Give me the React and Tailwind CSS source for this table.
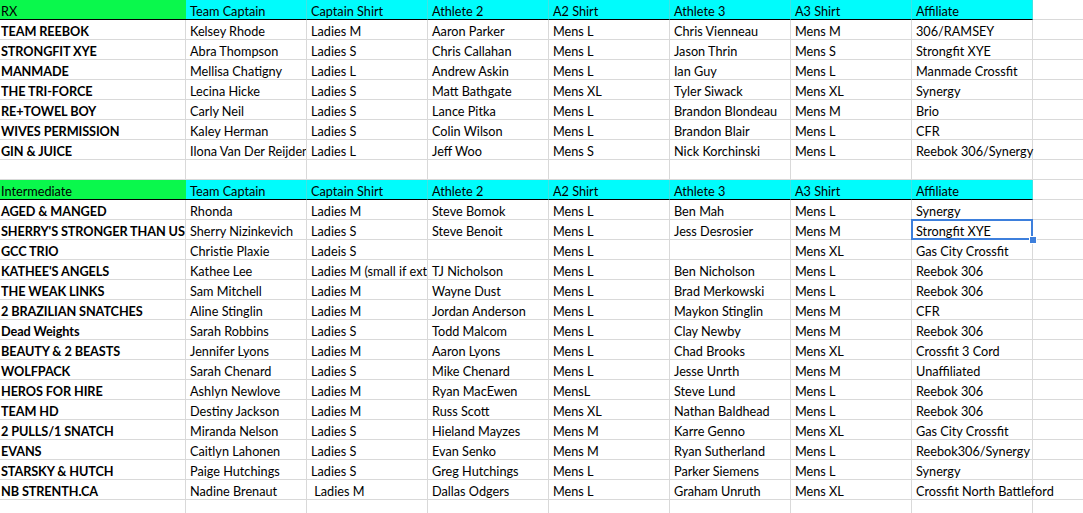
import React from "react";

const HEAD = ["Team Captain", "Captain Shirt", "Athlete 2", "A2 Shirt", "Athlete 3", "A3 Shirt", "Affiliate"];

const rx = [
  ["TEAM REEBOK", "Kelsey Rhode", "Ladies M", "Aaron Parker", "Mens L", "Chris Vienneau", "Mens M", "306/RAMSEY"],
  ["STRONGFIT XYE", "Abra Thompson", "Ladies S", "Chris Callahan", "Mens L", "Jason Thrin", "Mens S", "Strongfit XYE"],
  ["MANMADE", "Mellisa Chatigny", "Ladies L", "Andrew Askin", "Mens L", "Ian Guy", "Mens L", "Manmade Crossfit"],
  ["THE TRI-FORCE", "Lecina Hicke", "Ladies S", "Matt Bathgate", "Mens XL", "Tyler Siwack", "Mens XL", "Synergy"],
  ["RE+TOWEL BOY", "Carly Neil", "Ladies S", "Lance Pitka", "Mens L", "Brandon Blondeau", "Mens M", "Brio"],
  ["WIVES PERMISSION", "Kaley Herman", "Ladies S", "Colin Wilson", "Mens L", "Brandon Blair", "Mens L", "CFR"],
  ["GIN & JUICE", "Ilona Van Der Reijden", "Ladies L", "Jeff Woo", "Mens S", "Nick Korchinski", "Mens L", "Reebok 306/Synergy"],
];

const inter = [
  ["AGED & MANGED", "Rhonda", "Ladies M", "Steve Bomok", "Mens L", "Ben Mah", "Mens L", "Synergy"],
  ["SHERRY'S STRONGER THAN US", "Sherry Nizinkevich", "Ladies S", "Steve Benoit", "Mens L", "Jess Desrosier", "Mens M", "Strongfit XYE"],
  ["GCC TRIO", "Christie Plaxie", "Ladeis S", "", "Mens L", "", "Mens XL", "Gas City Crossfit"],
  ["KATHEE'S ANGELS", "Kathee Lee", "Ladies M (small if extra)", "TJ Nicholson", "Mens L", "Ben Nicholson", "Mens L", "Reebok 306"],
  ["THE WEAK LINKS", "Sam Mitchell", "Ladies M", "Wayne Dust", "Mens L", "Brad Merkowski", "Mens L", "Reebok 306"],
  ["2 BRAZILIAN SNATCHES", "Aline Stinglin", "Ladies M", "Jordan Anderson", "Mens L", "Maykon Stinglin", "Mens M", "CFR"],
  ["Dead Weights", "Sarah Robbins", "Ladies S", "Todd Malcom", "Mens L", "Clay Newby", "Mens M", "Reebok 306"],
  ["BEAUTY & 2 BEASTS", "Jennifer Lyons", "Ladies M", "Aaron Lyons", "Mens L", "Chad Brooks", "Mens XL", "Crossfit 3 Cord"],
  ["WOLFPACK", "Sarah Chenard", "Ladies S", "Mike Chenard", "Mens L", "Jesse Unrth", "Mens M", "Unaffiliated"],
  ["HEROS FOR HIRE", "Ashlyn Newlove", "Ladies M", "Ryan MacEwen", "MensL", "Steve Lund", "Mens L", "Reebok 306"],
  ["TEAM HD", "Destiny Jackson", "Ladies M", "Russ Scott", "Mens XL", "Nathan Baldhead", "Mens L", "Reebok 306"],
  ["2 PULLS/1 SNATCH", "Miranda Nelson", "Ladies S", "Hieland Mayzes", "Mens M", "Karre Genno", "Mens XL", "Gas City Crossfit"],
  ["EVANS", "Caitlyn Lahonen", "Ladies S", "Evan Senko", "Mens M", "Ryan Sutherland", "Mens L", "Reebok306/Synergy"],
  ["STARSKY & HUTCH", "Paige Hutchings", "Ladies S", "Greg Hutchings", "Mens L", "Parker Siemens", "Mens L", "Synergy"],
  ["NB STRENTH.CA", "Nadine Brenaut", " Ladies M", "Dallas Odgers", "Mens L", "Graham Unruth", "Mens XL", "Crossfit North Battleford"],
];

const cellBase = "h-5 border-r border-b border-[#d9d9d9] text-[12.7px] leading-[22px] whitespace-pre text-black";

function Cell({ children, idx, overflow, bold, selected }) {
  const pad = idx === 0 ? "pl-[1px]" : "pl-[4px]";
  const ov = selected ? "overflow-visible relative z-20" : overflow ? "overflow-visible relative z-10" : "overflow-hidden";
  return (
    <div className={`${cellBase} ${pad} ${ov} ${bold ? "font-bold tracking-[-0.1px]" : ""}`}>
      {children}
      {selected && (
        <>
          <div className="absolute left-[-1px] top-[-1px] right-[-1px] bottom-[-1px] border-2 border-[#3d7fdc] pointer-events-none" />
          <div className="absolute right-[-5px] bottom-[-5px] w-[8px] h-[8px] bg-[#3d7fdc] border border-white" />
        </>
      )}
    </div>
  );
}

function HeaderRow({ label }) {
  return (
    <>
      <div className="h-5 border-b border-black bg-[#0af84c] pl-[1px] text-[12.7px] leading-[22px] text-black">{label}</div>
      {HEAD.map((h, i) => (
        <div key={i} className="h-5 border-b border-r border-b-black border-r-[#3fe4e4] bg-[#00fcfc] pl-[4px] text-[12.7px] leading-[22px] text-black last:border-r-[#d9d9d9]">
          {h}
        </div>
      ))}
      <div className="h-5 border-b border-[#d9d9d9]" />
    </>
  );
}

function DataRow({ row, selCol }) {
  return (
    <>
      {row.map((v, i) => (
        <Cell key={i} idx={i} bold={i === 0} overflow={i === 7} selected={selCol === i}>
          {v}
        </Cell>
      ))}
      <div className="h-5 border-b border-[#d9d9d9]" />
    </>
  );
}

function EmptyRow() {
  return (
    <>
      {Array.from({ length: 8 }).map((_, i) => (
        <div key={i} className="h-5 border-r border-b border-[#d9d9d9]" />
      ))}
      <div className="h-5 border-b border-[#d9d9d9]" />
    </>
  );
}

export default function App() {
  return (
    <div className="w-[1083px] h-[513px] overflow-hidden bg-white" style={{ fontFamily: "Lato, 'Open Sans', sans-serif" }}>
      <div className="grid grid-cols-[186px_121px_121px_121px_121px_121px_121px_121px_1fr]">
        <HeaderRow label="RX" />
        {rx.map((r, i) => (
          <DataRow key={"rx" + i} row={r} />
        ))}
        <EmptyRow />
        <HeaderRow label="Intermediate" />
        {inter.map((r, i) => (
          <DataRow key={"in" + i} row={r} selCol={i === 1 ? 7 : -1} />
        ))}
        <EmptyRow />
      </div>
    </div>
  );
}
